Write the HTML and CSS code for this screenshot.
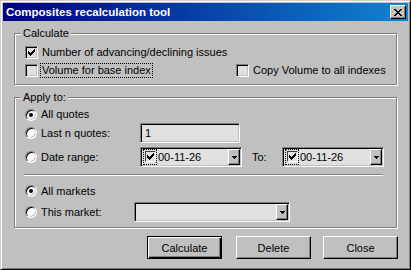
FILE: index.html
```html
<!DOCTYPE html>
<html lang="en">
<head>
    <meta charset="UTF-8">
    <title>Composites recalculation tool</title>
    <link rel="stylesheet" href="styles.css">
</head>
<body>
    <div class="window">
        <div class="titlebar">
            <span class="title">Composites recalculation tool</span>
            <button class="close-btn" aria-label="Close">
                <svg width="8" height="7" viewBox="0 0 8 7" shape-rendering="crispEdges">
                    <path d="M0 0h2v1H0z M6 0h2v1H6z M1 1h2v1H1z M5 1h2v1H5z M2 2h4v1H2z M3 3h2v1H3z M2 4h4v1H2z M1 5h2v1H1z M5 5h2v1H5z M0 6h2v1H0z M6 6h2v1H6z" fill="#000"/>
                </svg>
            </button>
        </div>

        <div class="dialog">
            <div class="group group-calc">
                <span class="group-title">Calculate</span>
                <div class="row">
                    <span class="check">
                        <svg width="7" height="7" viewBox="0 0 7 7" shape-rendering="crispEdges"><polygon points="0,2 1,2 1,3 2,3 2,4 3,4 3,3 4,3 4,2 5,2 5,1 6,1 6,0 7,0 7,3 6,3 6,4 5,4 5,5 4,5 4,6 3,6 3,7 2,7 2,6 1,6 1,5 0,5" fill="#000"/></svg>
                    </span>
                    <span class="label">Number of advancing/declining issues</span>
                </div>
                <div class="row row-split">
                    <div class="item">
                        <span class="check"></span>
                        <span class="label focus">Volume for base index</span>
                    </div>
                    <div class="item">
                        <span class="check"></span>
                        <span class="label">Copy Volume to all indexes</span>
                    </div>
                </div>
            </div>

            <div class="group group-apply">
                <span class="group-title">Apply to:</span>
                <div class="opt-row row-all">
                    <div class="opt"><span class="radio on"></span><span class="label">All quotes</span></div>
                </div>
                <div class="opt-row row-last">
                    <div class="opt"><span class="radio"></span><span class="label">Last n quotes:</span></div>
                    <div class="edit">1</div>
                </div>
                <div class="opt-row row-date">
                    <div class="opt"><span class="radio"></span><span class="label">Date range:</span></div>
                    <div class="combo">
                        <span class="date-focus"><span class="mini-check"><svg width="7" height="7" viewBox="0 0 7 7" shape-rendering="crispEdges"><polygon points="0,2 1,2 1,3 2,3 2,4 3,4 3,3 4,3 4,2 5,2 5,1 6,1 6,0 7,0 7,3 6,3 6,4 5,4 5,5 4,5 4,6 3,6 3,7 2,7 2,6 1,6 1,5 0,5" fill="#000"/></svg></span></span>
                        <span class="combo-value">00-11-26</span>
                        <span class="drop-btn"><svg width="5" height="3" viewBox="0 0 5 3" shape-rendering="crispEdges"><path d="M0 0h5v1h-1v1h-1v1h-1v-1h-1v-1h-1z" fill="#000"/></svg></span>
                    </div>
                    <span class="to-label">To:</span>
                    <div class="combo">
                        <span class="date-focus"><span class="mini-check"><svg width="7" height="7" viewBox="0 0 7 7" shape-rendering="crispEdges"><polygon points="0,2 1,2 1,3 2,3 2,4 3,4 3,3 4,3 4,2 5,2 5,1 6,1 6,0 7,0 7,3 6,3 6,4 5,4 5,5 4,5 4,6 3,6 3,7 2,7 2,6 1,6 1,5 0,5" fill="#000"/></svg></span></span>
                        <span class="combo-value">00-11-26</span>
                        <span class="drop-btn"><svg width="5" height="3" viewBox="0 0 5 3" shape-rendering="crispEdges"><path d="M0 0h5v1h-1v1h-1v1h-1v-1h-1v-1h-1z" fill="#000"/></svg></span>
                    </div>
                </div>

                <div class="separator"></div>

                <div class="opt-row row-markets">
                    <div class="opt"><span class="radio on"></span><span class="label">All markets</span></div>
                </div>
                <div class="opt-row row-market">
                    <div class="opt opt-narrow"><span class="radio"></span><span class="label">This market:</span></div>
                    <div class="combo combo-wide">
                        <span class="combo-value"></span>
                        <span class="drop-btn"><svg width="5" height="3" viewBox="0 0 5 3" shape-rendering="crispEdges"><path d="M0 0h5v1h-1v1h-1v1h-1v-1h-1v-1h-1z" fill="#000"/></svg></span>
                    </div>
                </div>
            </div>

            <div class="buttons">
                <button class="btn btn-default">Calculate</button>
                <button class="btn btn-delete">Delete</button>
                <button class="btn btn-close">Close</button>
            </div>
        </div>
    </div>
</body>
</html>
```

FILE: styles.css
```css
* {
    box-sizing: border-box;
}
body {
    margin: 0;
    background: #c0c0c0;
    font-family: "Liberation Sans", Arial, sans-serif;
    font-size: 11px;
    color: #000;
}
.window {
    width: 411px;
    height: 270px;
    background: #c0c0c0;
    border: 1px solid;
    border-color: #d4d0c8 #000 #000 #d4d0c8;
    box-shadow: inset 1px 1px 0 #fff, inset -1px -1px 0 #808080;
    padding: 2px;
}
.titlebar {
    height: 18px;
    display: flex;
    align-items: center;
    justify-content: space-between;
    background: linear-gradient(to right, #000080, #1084d0);
    padding: 0 2px 0 3px;
}
.title {
    color: #fff;
    font-weight: bold;
    font-size: 11.5px;
}
.close-btn {
    width: 16px;
    height: 14px;
    padding: 0;
    display: flex;
    align-items: center;
    justify-content: center;
    background: #c0c0c0;
    border: 1px solid;
    border-color: #fff #000 #000 #fff;
    box-shadow: inset -1px -1px 0 #808080;
}
.dialog {
    padding: 0 11px;
}

/* group boxes */
.group {
    position: relative;
    border: 1px solid #808080;
    box-shadow: inset 1px 1px 0 #fff, 1px 1px 0 #fff;
    padding-left: 10px;
}
.group-title {
    position: absolute;
    top: -7px;
    left: 6px;
    padding: 0 2px;
    line-height: 13px;
    background: #c0c0c0;
}
.group-calc {
    margin-top: 12px;
    padding-top: 9px;
    padding-bottom: 5px;
}
.group-apply {
    margin-top: 12px;
    padding-top: 8px;
    padding-bottom: 5px;
}

.row {
    height: 18px;
    display: flex;
    align-items: center;
}
.row-split {
    display: grid;
    grid-template-columns: 211px auto;
}
.item {
    display: flex;
    align-items: center;
}
.label {
    margin-left: 2px;
    padding: 0 1px;
    line-height: 13px;
    border: 1px dotted transparent;
    white-space: nowrap;
}
.label.focus {
    border-color: #000;
}

/* checkbox and radio */
.check {
    width: 13px;
    height: 13px;
    flex: none;
    display: flex;
    align-items: center;
    justify-content: center;
    background: #e0e0e0;
    border: 1px solid;
    border-color: #808080 #fff #fff #808080;
    box-shadow: inset 1px 1px 0 #000, inset -1px -1px 0 #c0c0c0;
}
.radio {
    position: relative;
    width: 12px;
    height: 12px;
    flex: none;
    border-radius: 50%;
    background: #fff;
    border: 1px solid;
    border-color: #808080 #fff #fff #808080;
    box-shadow: inset 1px 1px 0 #000, inset -1px -1px 0 #c0c0c0;
}
.radio.on::after {
    content: "";
    position: absolute;
    left: 3px;
    top: 3px;
    width: 4px;
    height: 4px;
    border-radius: 50%;
    background: #000;
}

/* apply rows */
.opt-row {
    display: flex;
    align-items: center;
}
.opt {
    width: 115px;
    display: flex;
    align-items: center;
}
.opt-narrow {
    width: 109px;
}
.row-all {
    height: 17px;
}
.row-last {
    height: 20px;
}
.row-date {
    height: 20px;
    margin-top: 4px;
}
.row-markets {
    height: 18px;
    margin-top: 6px;
}
.row-market {
    height: 20px;
    margin-top: 2px;
}
.edit {
    width: 100px;
    height: 20px;
    padding: 2px 0 0 4px;
    line-height: 14px;
    background: #e0e0e0;
    border: 1px solid;
    border-color: #808080 #fff #fff #808080;
    box-shadow: inset 1px 1px 0 #000, inset -1px -1px 0 #c0c0c0;
}
.combo {
    width: 102px;
    height: 20px;
    display: flex;
    align-items: center;
    padding: 1px;
    background: #e0e0e0;
    border: 1px solid;
    border-color: #808080 #fff #fff #808080;
    box-shadow: inset 1px 1px 0 #000, inset -1px -1px 0 #c0c0c0;
}
.combo-wide {
    width: 156px;
}
.combo-value {
    flex: 1;
    margin-left: 1px;
    line-height: 14px;
}
.date-focus {
    width: 14px;
    height: 16px;
    margin-left: 1px;
    display: flex;
    justify-content: center;
    padding-top: 1px;
    border: 1px dotted #000;
}
.mini-check {
    width: 11px;
    height: 11px;
    display: flex;
    align-items: center;
    justify-content: center;
    background: #e0e0e0;
    border: 1px solid;
    border-color: #404040 #fff #fff #404040;
}
.drop-btn {
    width: 12px;
    height: 16px;
    display: flex;
    align-items: center;
    justify-content: center;
    background: #c0c0c0;
    border: 1px solid;
    border-color: #fff #000 #000 #fff;
    box-shadow: inset -1px -1px 0 #808080;
}
.to-label {
    width: 30px;
    margin-left: 10px;
}
.separator {
    height: 2px;
    margin: 7px 13px 0 -1px;
    border-top: 1px solid #808080;
    border-bottom: 1px solid #fff;
}

/* buttons */
.buttons {
    display: flex;
    justify-content: flex-end;
    margin-top: 8px;
    margin-right: -1px;
}
.btn {
    width: 75px;
    height: 23px;
    padding: 0;
    font-family: inherit;
    font-size: 11px;
    color: #000;
    background: #c0c0c0;
    border: 1px solid;
    border-color: #fff #000 #000 #fff;
    box-shadow: inset -1px -1px 0 #808080;
}
.btn-default {
    border-color: #000;
    box-shadow: inset 1px 1px 0 #fff, inset -1px -1px 0 #000, inset -2px -2px 0 #808080;
}
.btn-delete {
    margin-left: 14px;
}
.btn-close {
    margin-left: 12px;
}
```
